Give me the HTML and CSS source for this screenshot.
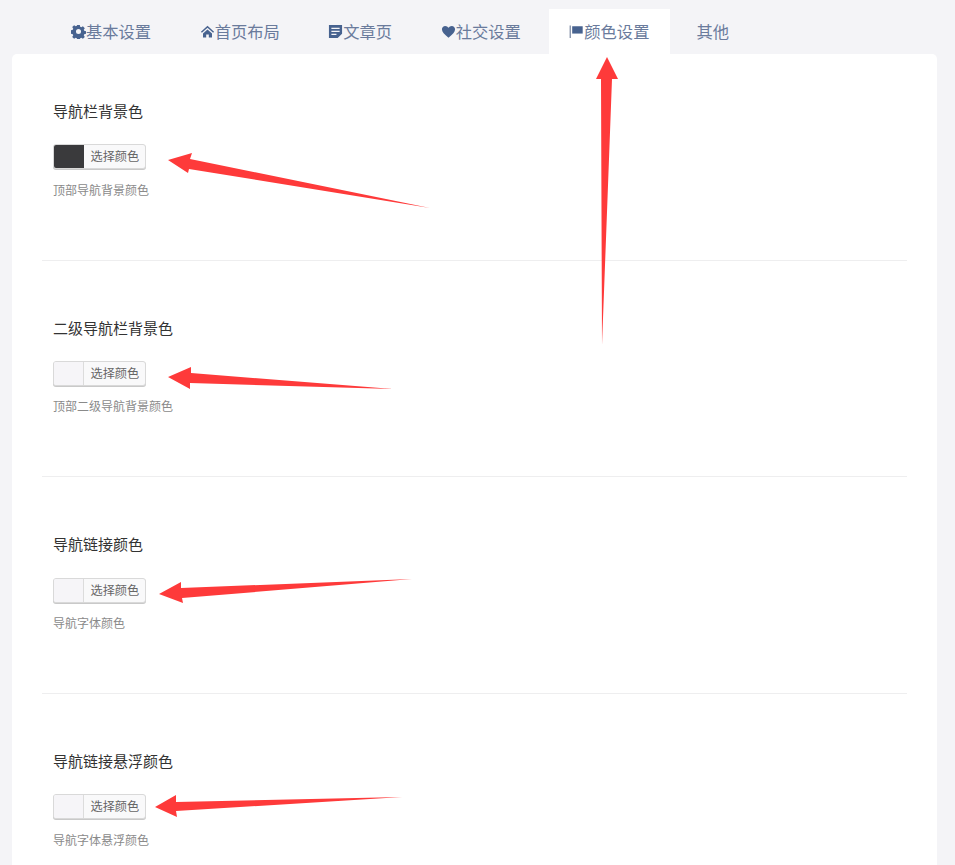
FILE: index.html
```html
<!DOCTYPE html>
<html lang="zh-CN">
<head>
<meta charset="utf-8">
<title>颜色设置</title>
<link rel="stylesheet" href="styles.css">
</head>
<body>
<nav class="tabs">
  <a class="tab"><svg class="ico" viewBox="0 0 16 16"><path fill-rule="evenodd" d="M6.6 1h2.8l.4 2 1.2.5 1.7-1.1 2 2-1.1 1.7.5 1.2 2 .4v2.8l-2 .4-.5 1.2 1.1 1.7-2 2-1.7-1.1-1.2.5-.4 2H6.6l-.4-2-1.2-.5-1.7 1.1-2-2 1.1-1.7-.5-1.2-2-.4V6.6l2-.4.5-1.2-1.1-1.700 2-2 1.7 1.1 1.2-.5zM8 5.300a2.700 2.700 0 1 0 0 5.400 2.700 2.700 0 0 0 0-5.400z"/></svg>基本设置</a>
  <a class="tab"><svg class="ico" viewBox="0 0 16 16"><path d="M8 1.800 1 8.200l1 1.100L8 4l6 5.300 1-1.100zM3.200 10.200V14.500h3.400v-3.200h2.800v3.200h3.400v-4.300L8 5.800z"/></svg>首页布局</a>
  <a class="tab"><svg class="ico" viewBox="0 0 16 16"><path fill-rule="evenodd" d="M1 1h14v9.500L10.300 15H1zM3.600 4v1.400h8.800V4zm0 3.200v1.400h8.800V7.200zm0 3.200v1.400h5.400v-1.400z"/></svg>文章页</a>
  <a class="tab"><svg class="ico" viewBox="0 0 16 16"><path d="M8 14.600C3.500 11 1 8.700 1 5.700 1 3.500 2.600 2 4.500 2 6 2 7.300 2.800 8 4.100 8.700 2.800 10 2 11.500 2 13.400 2 15 3.500 15 5.700c0 3-2.500 5.300-7 8.900z"/></svg>社交设置</a>
  <a class="tab active"><svg class="ico" viewBox="0 0 16 16"><path class="pole" d="M.6 1.500h1.500v13.500H.6z"/><path d="M3.400 2.400h11.200v7.800H3.400z"/></svg>颜色设置</a>
  <a class="tab">其他</a>
</nav>

<main class="card">
  <section class="field">
    <h3 class="label">导航栏背景色</h3>
    <div class="picker"><span class="swatch dark"></span><span class="pick-text">选择颜色</span></div>
    <p class="desc">顶部导航背景颜色</p>
  </section>
  <section class="field">
    <h3 class="label">二级导航栏背景色</h3>
    <div class="picker"><span class="swatch"></span><span class="pick-text">选择颜色</span></div>
    <p class="desc">顶部二级导航背景颜色</p>
  </section>
  <section class="field">
    <h3 class="label">导航链接颜色</h3>
    <div class="picker"><span class="swatch"></span><span class="pick-text">选择颜色</span></div>
    <p class="desc">导航字体颜色</p>
  </section>
  <section class="field">
    <h3 class="label">导航链接悬浮颜色</h3>
    <div class="picker"><span class="swatch"></span><span class="pick-text">选择颜色</span></div>
    <p class="desc">导航字体悬浮颜色</p>
  </section>
</main>

<svg class="arrows" viewBox="0 0 955 865" width="955" height="865">
  <polygon points="607,57 618,79 612,79 602,345 601,79 596,79"/>
  <polygon points="168,160 192,153 190,159 430,208 189,169 188,173"/>
  <polygon points="168,377 191,367 191,373 393,389 190,383 190,389"/>
  <polygon points="159,594 181,582 181,588 412,579 182,598 183,603"/>
  <polygon points="155,807 176,795 176,802 402,797 176,811 177,817"/>
</svg>
</body>
</html>
```
FILE: styles.css
```css
* {
  box-sizing: border-box;
}

html,
body {
  height: 100%;
  margin: 0;
  overflow: hidden;
}

body {
  position: relative;
  background: #f4f4f7;
  font-family: "Liberation Sans", "Noto Sans CJK SC", sans-serif;
}

.tabs {
  display: flex;
  gap: 7.5px;
  height: 54px;
  padding: 9px 0 0 50.5px;
}

.tab {
  display: flex;
  align-items: center;
  height: 45px;
  padding: 0 20.5px 1px;
  color: #6a7b9c;
  font-size: 16.3px;
  white-space: nowrap;
}

.tab.active {
  margin-right: -1.5px;
  background: #fff;
}

.ico {
  flex: none;
  width: 15px;
  height: 15px;
  fill: #47628f;
}

.pole {
  fill: #8b97ad;
}

.card {
  margin: 0 18px 0 12px;
  min-height: 900px;
  background: #fff;
  border-radius: 5px 5px 0 0;
}

.field {
  margin: 0 30px 10px;
  padding: 48px 0 60.07px 11px;
  border-bottom: 1px solid #eeeeef;
}

.label {
  margin: 0;
  color: #333;
  font-size: 15px;
  font-weight: 400;
  line-height: 20px;
}

.picker {
  display: flex;
  width: 93px;
  height: 25px;
  margin-top: 22.4px;
  overflow: hidden;
  background: #f9f9fa;
  border: 1px solid #d9d9d9;
  border-radius: 3px;
  box-shadow: 0 1px 0 #c9c9c9;
}

.swatch {
  flex: none;
  width: 30px;
  background: #f6f5f8;
  border-right: 1px solid #dcdcdc;
}

.swatch.dark {
  background: #3a3a3c;
  border-right-color: #3a3a3c;
}

.pick-text {
  padding-left: 6.5px;
  color: #666;
  font-size: 12.2px;
  line-height: 25px;
  white-space: nowrap;
}

.desc {
  margin: 12.2px 0 0;
  color: #8a8a8a;
  font-size: 12px;
  line-height: 18px;
}

.arrows {
  position: absolute;
  top: 0;
  left: 0;
  pointer-events: none;
}

.arrows polygon {
  fill: #fe3a3a;
}
```
